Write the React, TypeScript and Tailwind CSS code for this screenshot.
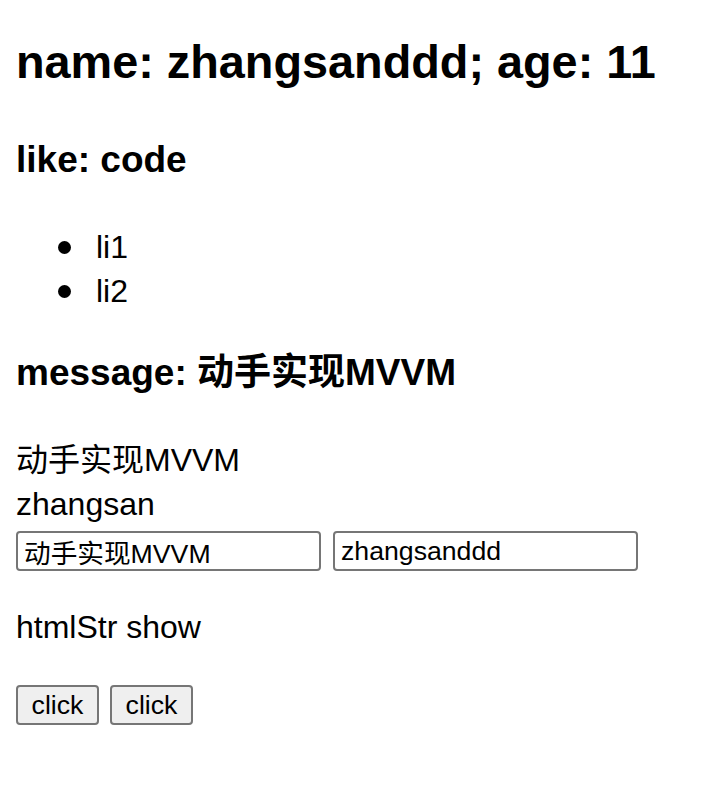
import { useState } from 'react';

const font = { fontFamily: '"Liberation Sans", "Noto Sans CJK SC", sans-serif' };

export default function App() {
    const [message, setMessage] = useState('动手实现MVVM');
    const [name, setName] = useState('zhangsanddd');

    return (
        <div className="min-h-[792px] bg-white text-black px-4 pb-10 text-[32px] leading-[44px]" style={font}>
            <h1 className="mt-[34px] text-[46.8px] leading-[56px] font-bold">name: {name}; age: 11</h1>

            <h3 className="mt-[48px] text-[37px] leading-[44px] font-bold">like: code</h3>

            <ul className="mt-[43px] pl-[42px]">
                {['li1', 'li2'].map((item) => (
                    <li key={item} className="flex items-center">
                        <span className="w-[13px] h-[13px] rounded-full bg-black mr-[25px]"></span>
                        <span>{item}</span>
                    </li>
                ))}
            </ul>

            <h3 className="mt-[38px] text-[37px] leading-[44px] font-bold">message: {message}</h3>

            <div className="mt-[43px]">
                <p>{message}</p>
                <p>zhangsan</p>
            </div>

            <div className="mt-[5px] flex gap-[12px]">
                <input
                    value={message}
                    onChange={(e) => setMessage(e.target.value)}
                    className="w-[305px] h-[40px] border-2 border-[#767676] rounded-[4px] px-[6px] text-[26.67px] leading-[36px] outline-none"
                    style={font}
                />
                <input
                    value={name}
                    onChange={(e) => setName(e.target.value)}
                    className="w-[305px] h-[40px] border-2 border-[#767676] rounded-[4px] px-[6px] text-[26.67px] leading-[36px] outline-none"
                    style={font}
                />
            </div>

            <p className="mt-[34px]">htmlStr show</p>

            <div className="mt-[36px] flex gap-[11px]">
                <button className="w-[83px] h-[40px] bg-[#efefef] border-2 border-[#767676] rounded-[4px] text-[26.67px] leading-[36px]">
                    click
                </button>
                <button className="w-[83px] h-[40px] bg-[#efefef] border-2 border-[#767676] rounded-[4px] text-[26.67px] leading-[36px]">
                    click
                </button>
            </div>
        </div>
    );
}
